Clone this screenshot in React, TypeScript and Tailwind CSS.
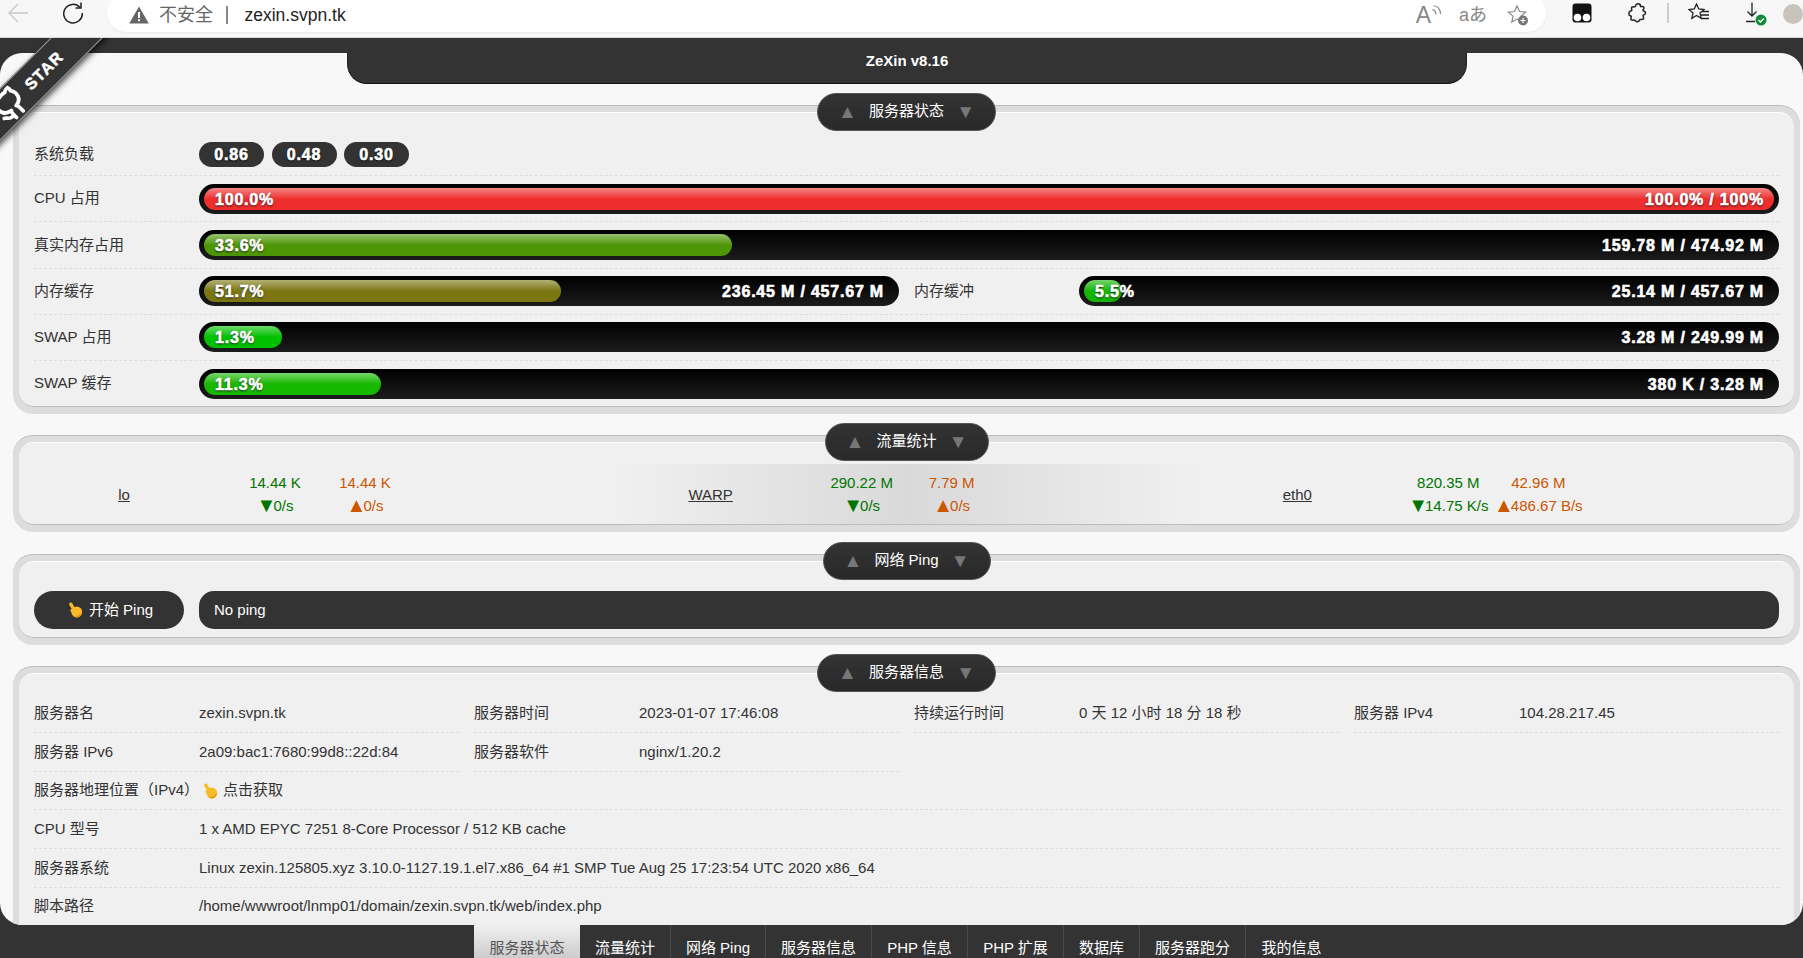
import React from "react";
import { FiGithub } from "react-icons/fi";

const Hand = () => (
  <svg width="16" height="16" viewBox="0 0 16 16" className="inline-block shrink-0">
    <path d="M3.800 2.200L7.500 8.500" stroke="#f8bb2a" strokeWidth="3.300" strokeLinecap="round" fill="none" />
    <circle cx="9.800" cy="10" r="5.400" fill="#f8bb2a" />
    <path d="M4.800 8.300L7.500 12" stroke="#f8bb2a" strokeWidth="2.800" strokeLinecap="round" fill="none" />
    <path d="M15 9.500c.2 3.200-2.200 5.900-5.200 5.900-1.700 0-3.100-.7-4.100-1.900 1.200.6 2.800.8 4.400.2 2.300-.8 3.800-2.600 4.900-4.200z" fill="#e59a10" />
  </svg>
);

const Legend = ({ title, width, top }: { title: string; width: string; top: string }) => (
  <div className={`relative z-10 flex justify-center -mb-[26px] pl-[10px] ${top}`}>
    <div className={`flex h-[38px] items-center justify-between rounded-[19px] border border-[#555] bg-[linear-gradient(180deg,#333,#292929)] px-[20px] pb-[1px] text-[15px] text-white ${width}`}>
      <span className="text-[19px] leading-none text-[#777]">▲</span>
      <span className="whitespace-nowrap">{title}</span>
      <span className="text-[19px] leading-none text-[#777]">▼</span>
    </div>
  </div>
);

const Card = ({ inner, children }: { inner: string; children: React.ReactNode }) => (
  <div className="ml-[13px] mr-[3px] rounded-[20px] border-t border-[#bbb] bg-[#ddd] px-[6px] pb-[7px] pt-[6px]">
    <div className={`rounded-[15px] border-t border-b border-t-white border-b-[#bbb] border-b-dashed bg-[#f0f0f0] px-[15px] ${inner}`}>{children}</div>
  </div>
);

const Bar = ({ width, color, left, right, cls }: { width: string; color: string; left: string; right: string; cls?: string }) => (
  <div className={`relative h-[30px] rounded-[15px] bg-[linear-gradient(180deg,#000,#1c1c1c)] px-[5px] py-[4px] ${cls ?? "flex-1"}`}>
    <div className={`h-[22px] rounded-[11px] bg-[linear-gradient(180deg,rgba(255,255,255,.42),rgba(255,255,255,.05)_45%,transparent_50%)] ${color}`} style={{ width }} />
    <span className="absolute left-[16px] top-[6px] text-[16px] font-bold leading-[20px] tracking-[.8px] text-white [-webkit-text-stroke:0.6px_#fff] [text-shadow:0_1px_2px_#000]">{left}</span>
    <span className="absolute right-[15px] top-[6px] text-[16px] font-bold leading-[20px] tracking-[.8px] text-white [-webkit-text-stroke:0.6px_#fff] [text-shadow:0_1px_2px_#000]">{right}</span>
  </div>
);

const Label = ({ children, cls }: { children: React.ReactNode; cls?: string }) => (
  <div className={`w-[165px] shrink-0 whitespace-nowrap ${cls ?? "leading-[28px]"}`}>{children}</div>
);

const Net = ({ name, a, b, c, d, mid }: { name: string; a: string; b: string; c: string; d: string; mid?: boolean }) => (
  <div className={`flex h-[60px] items-center ${mid ? "bg-[linear-gradient(90deg,transparent,#d9d9d9_50%,transparent)]" : ""}`}>
    <div className="mt-[2px] w-[192px] text-center underline">{name}</div>
    <div className="ml-[10px] w-[90px] whitespace-nowrap text-center leading-[23px] text-[#007500]">
      <div>{a}</div>
      <div className="flex items-center justify-center"><span className="-mr-[3px] text-[20px] leading-[23px]">▼</span>{c}</div>
    </div>
    <div className="w-[90px] whitespace-nowrap text-center leading-[23px] text-[#c50]">
      <div>{b}</div>
      <div className="flex items-center justify-center"><span className="-mr-[3px] text-[20px] leading-[23px]">▲</span>{d}</div>
    </div>
  </div>
);

const Info = ({ label, value, line = true }: { label: string; value: React.ReactNode; line?: boolean }) => (
  <div className={`flex h-[38.67px] items-center whitespace-nowrap ${line ? "border-b border-dashed border-[#ddd]" : ""}`}>
    <div className="w-[165px] shrink-0">{label}</div>
    <div>{value}</div>
  </div>
);

const tabs = [
  ["服务器状态", "w-[106px]"],
  ["流量统计", "w-[91px]"],
  ["网络 Ping", "w-[95px]"],
  ["服务器信息", "w-[106px]"],
  ["PHP 信息", "w-[96px]"],
  ["PHP 扩展", "w-[96px]"],
  ["数据库", "w-[76px]"],
  ["服务器跑分", "w-[106px]"],
  ["我的信息", "w-[91px]"],
];

export default function App() {
  return (
    <div className="relative flex h-[958px] w-[1803px] flex-col overflow-hidden bg-[#333] text-[15px] text-[#333] [font-family:'Liberation_Sans','Noto_Sans_CJK_SC',sans-serif]">
      {/* browser chrome */}
      <div className="flex h-[38px] shrink-0 items-start border-b border-[#d8d8d8] bg-[#f7f7f7]">
        <svg width="22" height="22" viewBox="0 0 22 22" className="ml-[7px] mt-[1px]" fill="none" stroke="#c9c9c9" strokeWidth="1.300">
          <path d="M21 12H2M11 3l-9 9 9 9" />
        </svg>
        <svg width="22" height="22" viewBox="0 0 22 22" className="ml-[33px] mt-[2px]" fill="none" stroke="#222" strokeWidth="1.500">
          <path d="M18 5.500A9.300 9.300 0 1 0 20.300 11" />
          <path d="M19 0.500V6H13.500" />
        </svg>
        <div className="-mt-[6px] ml-[23px] flex h-[38px] w-[1439px] items-center rounded-[19px] bg-white pt-[4px] shadow-[0_1px_2px_rgba(0,0,0,.06)]">
          <svg width="20" height="18" viewBox="0 0 20 18" className="ml-[22px]">
            <path d="M10 0.500L19.800 17.500H0.200z" fill="#666" />
            <rect x="9" y="6" width="2" height="6" fill="#fff" />
            <rect x="9" y="13.200" width="2" height="2" fill="#fff" />
          </svg>
          <span className="ml-[10px] text-[18px] text-[#666]">不安全</span>
          <span className="ml-[13px] h-[18px] w-[1.500px] bg-[#888]" />
          <span className="ml-[17px] text-[17.500px] text-[#222]">zexin.svpn.tk</span>
          <span className="ml-auto flex items-center">
            <span className="flex items-start text-[#888]">
              <span className="text-[23px] font-light leading-[22px]">A</span>
              <svg width="12" height="14" viewBox="0 0 10 12" fill="none" stroke="#888" strokeWidth="1">
                <path d="M1 5c1.500 0 3 1.500 3 4M2 1.500c3.500 0 6 3 6 7" />
              </svg>
            </span>
            <span className="ml-[16px] text-[18px] leading-none text-[#888]">aあ</span>
            <svg width="22" height="22" viewBox="0 0 22 22" className="ml-[20px] mr-[17px]">
              <path d="M10 2l2.500 5.500 6 .6-4.500 4 1.200 6-5.200-3-5.200 3 1.200-6-4.500-4 6-.6z" fill="none" stroke="#888" strokeWidth="1.200" />
              <circle cx="16" cy="16.500" r="5" fill="#777" />
              <path d="M16 14v5M13.500 16.500h5" stroke="#fff" strokeWidth="1.200" />
            </svg>
          </span>
        </div>
        <svg width="20" height="20" viewBox="0 0 20 20" className="ml-[26px] mt-[3px]">
          <rect x="0.500" y="0.500" width="19" height="19" rx="3" fill="#111" />
          <circle cx="5.500" cy="14.500" r="3.800" fill="#fff" />
          <circle cx="14.500" cy="14.500" r="3.800" fill="#fff" />
        </svg>
        <svg width="20" height="20" viewBox="0 0 24 24" className="ml-[36px] mt-[3px]" fill="none" stroke="#222" strokeWidth="1.800">
          <path d="M9 4a3 3 0 0 1 6 0c0 1 3-.5 4 1s-1 3-1 4c0 .9 3 .5 3 3s-3 2-3 3c0 1 1.500 2.500.5 4s-3.500.3-4.500 1c-.8.5 0 2.500-2.500 2.500S9 21 8 20.500c-1-.5-3.200.8-4.300-.3S4.500 17 4 16c-.5-1-3 0-3-3.500S4 10 4.500 9c.5-1-1-3 0-4s4 .5 4.500-1z" />
        </svg>
        <span className="ml-[19px] mt-[3px] h-[20px] w-[1.500px] bg-[#ccc]" />
        <svg width="22" height="20" viewBox="0 0 22 20" className="ml-[19px] mt-[3px]" fill="none" stroke="#222" strokeWidth="1.300">
          <path d="M8.500 1l2.200 5 5.300.5-4 3.600 1.200 5.300-4.700-2.900-4.700 2.900L5 10.100 1 6.500 6.300 6zM14 8.500h7M13 12h8M13 15.500h8" />
        </svg>
        <svg width="24" height="26" viewBox="0 0 24 26" className="ml-[36px] mt-[2px]">
          <path d="M6 0.500V14M1.500 9.500L6 14l4.500-4.500M0 19.500h9" fill="none" stroke="#222" strokeWidth="1.300" />
          <circle cx="15" cy="18" r="5.500" fill="#128a3c" />
          <path d="M12.500 18l2 2 3.200-3.500" fill="none" stroke="#fff" strokeWidth="1.300" />
        </svg>
        <span className="ml-[13px] mt-[4px] h-[20px] w-[20px] shrink-0 rounded-full bg-[#c8c4bc]" />
      </div>

      {/* page */}
      <div className="mt-[15px] h-[872px] shrink-0 overflow-hidden rounded-[22px] bg-[#f8f8f8]">
        <div className="relative z-10 ml-[347px] -mt-[15px] flex h-[46px] w-[1120px] items-center justify-center rounded-b-[20px] border-x border-b border-x-[#222] border-b-[#111] bg-[#333] pt-[2px] text-[15px] font-bold text-white">
          ZeXin v8.16
        </div>

        <Legend title="服务器状态" width="w-[179px]" top="mt-[9px]" />
        <Card inner="pt-[29px] pb-[7px]">
          <div className="flex h-[34px] items-start border-b border-dashed border-[#ddd]">
            <Label cls="-mt-[2px] leading-[28px]">系统负载</Label>
            <div className="flex gap-[7.500px]">
              {["0.86", "0.48", "0.30"].map((v) => (
                <span key={v} className="flex h-[25px] w-[65px] items-center justify-center rounded-[13px] bg-[#333] pt-[1px] text-[16px] font-bold tracking-[.8px] text-white [-webkit-text-stroke:0.6px_#fff] [text-shadow:0_1px_2px_#000]">{v}</span>
              ))}
            </div>
          </div>
          <div className="flex h-[46px] items-start border-b border-dashed border-[#ddd] pt-[8px]">
            <Label>CPU 占用</Label>
            <Bar width="100%" color="bg-[#ee2d2d]" left="100.0%" right="100.0% / 100%" />
          </div>
          <div className="flex h-[47px] items-start border-b border-dashed border-[#ddd] pt-[8px]">
            <Label cls="leading-[29px]">真实内存占用</Label>
            <Bar width="33.6%" color="bg-[#4d9606]" left="33.6%" right="159.78 M / 474.92 M" />
          </div>
          <div className="flex h-[46px] items-start border-b border-dashed border-[#ddd] pt-[7px]">
            <Label cls="leading-[30px]">内存缓存</Label>
            <Bar width="51.7%" color="bg-[#7b7612]" left="51.7%" right="236.45 M / 457.67 M" cls="w-[700px] shrink-0" />
            <Label cls="ml-[15px] leading-[30px]">内存缓冲</Label>
            <Bar width="5.5%" color="bg-[#13b605]" left="5.5%" right="25.14 M / 457.67 M" />
          </div>
          <div className="flex h-[46px] items-start border-b border-dashed border-[#ddd] pt-[7px]">
            <Label cls="leading-[30px]">SWAP 占用</Label>
            <Bar width="78px" color="bg-[#00c000]" left="1.3%" right="3.28 M / 249.99 M" />
          </div>
          <div className="flex h-[38px] items-start pt-[8px]">
            <Label>SWAP 缓存</Label>
            <Bar width="11.3%" color="bg-[#17b800]" left="11.3%" right="380 K / 3.28 M" />
          </div>
        </Card>

        <Legend title="流量统计" width="w-[164px]" top="mt-[9px]" />
        <Card inner="pt-[21px]">
          <div className="-ml-[6px] grid w-[1760px] grid-cols-3">
            <Net name="lo" a="14.44 K" b="14.44 K" c="0/s" d="0/s" />
            <Net name="WARP" a="290.22 M" b="7.79 M" c="0/s" d="0/s" mid />
            <Net name="eth0" a="820.35 M" b="42.96 M" c="14.75 K/s" d="486.67 B/s" />
          </div>
        </Card>

        <Legend title="网络 Ping" width="w-[168px]" top="mt-[10px]" />
        <Card inner="pt-[29px] pb-[8px]">
          <div className="flex gap-[15px]">
            <button className="flex h-[38px] w-[150px] shrink-0 items-center justify-center gap-[6px] rounded-[19px] bg-[#333] pl-[2px] text-[15px] text-white">
              <Hand />
              开始 Ping
            </button>
            <div className="flex h-[38px] flex-1 items-center rounded-[15px] bg-[#333] px-[15px] text-white">No ping</div>
          </div>
        </Card>

        <Legend title="服务器信息" width="w-[179px]" top="mt-[9px]" />
        <Card inner="pt-[20.500px] pb-[40px]">
          <div className="grid grid-cols-4 gap-x-[15px]">
            <Info label="服务器名" value="zexin.svpn.tk" />
            <Info label="服务器时间" value="2023-01-07 17:46:08" />
            <Info label="持续运行时间" value="0 天 12 小时 18 分 18 秒" />
            <Info label="服务器 IPv4" value="104.28.217.45" />
            <Info label="服务器 IPv6" value="2a09:bac1:7680:99d8::22d:84" />
            <Info label="服务器软件" value="nginx/1.20.2" />
          </div>
          <Info label="服务器地理位置（IPv4）" value={<span className="ml-[3px] flex items-center gap-[5px]"><Hand />点击获取</span>} />
          <Info label="CPU 型号" value="1 x AMD EPYC 7251 8-Core Processor / 512 KB cache" />
          <Info label="服务器系统" value="Linux zexin.125805.xyz 3.10.0-1127.19.1.el7.x86_64 #1 SMP Tue Aug 25 17:23:54 UTC 2020 x86_64" />
          <Info label="脚本路径" value="/home/wwwroot/lnmp01/domain/zexin.svpn.tk/web/index.php" />
        </Card>
      </div>

      {/* footer */}
      <div className="flex h-[33px] shrink-0 justify-center overflow-hidden bg-[#333] pl-[8px]">
        {tabs.map(([t, w], i) => (
          <div key={t} className={`h-[33px] shrink-0 whitespace-nowrap pt-[13px] text-center leading-[20px] ${w} ${i === 0 ? "bg-[linear-gradient(180deg,#f0f0f0,#ccc)] text-[#555]" : i === 8 ? "text-white" : "border-r border-[#4a4a4a] text-white"}`}>
            {t}
          </div>
        ))}
      </div>

      {/* ribbon */}
      <div className="absolute left-0 top-[38px] h-[130px] w-[130px] overflow-hidden">
        <div className="absolute -left-[73px] top-[0.500px] flex h-[37px] w-[260px] -rotate-45 items-center border-y border-[#999] bg-[#333] pl-[47px] text-white shadow-[0_3px_6px_rgba(0,0,0,.7)]">
          <FiGithub size={32} strokeWidth={2.800} className="shrink-0" />
          <span className="ml-[9px] text-[16px] font-bold tracking-[1.200px] [-webkit-text-stroke:0.5px_#fff]">STAR</span>
        </div>
      </div>
    </div>
  );
}
